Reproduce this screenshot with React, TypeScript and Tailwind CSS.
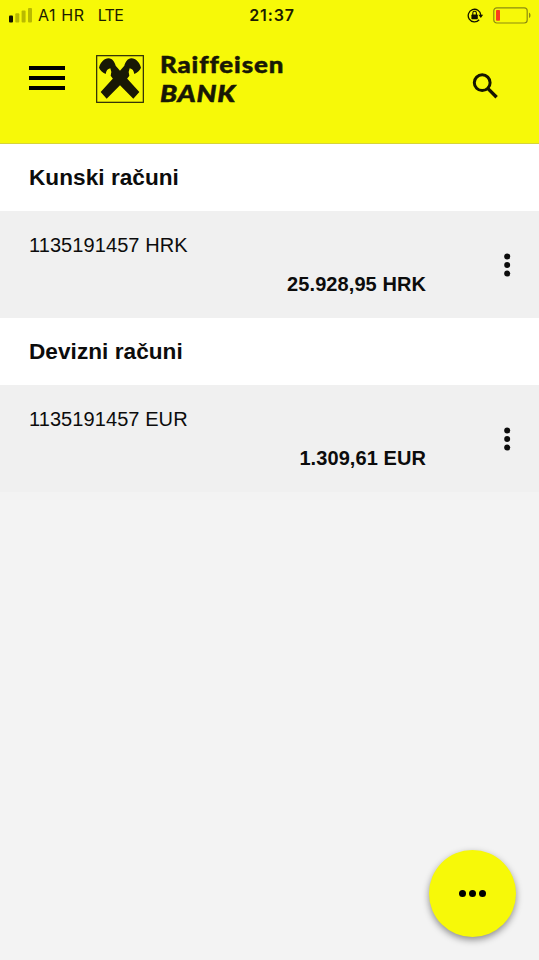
import React from 'react';

const accounts = [
    { title: 'Kunski računi', number: '1135191457 HRK', balance: '25.928,95 HRK' },
    { title: 'Devizni računi', number: '1135191457 EUR', balance: '1.309,61 EUR' },
];

const StatusBar = () => (
    <div className="grid grid-cols-[1fr_auto_1fr] items-center h-[30px] pl-[9px] pr-[8px] font-['Inter',sans-serif] text-[16px] leading-[30px] text-[#1c1c00]">
        <div className="flex items-center">
            <svg width="24" height="15" viewBox="0 0 24 15" className="mr-[5px]">
                <rect x="0" y="7.5" width="4" height="7" rx="1" fill="#111100" />
                <rect x="6.3" y="5.3" width="4" height="9.2" rx="1" fill="#b9b900" />
                <rect x="12.6" y="2.6" width="4" height="11.9" rx="1" fill="#b9b900" />
                <rect x="19" y="0" width="4" height="14.5" rx="1" fill="#b9b900" />
            </svg>
            <span className="tracking-[0.6px]">A1 HR</span>
            <span className="ml-[13px] tracking-[-0.6px]">LTE</span>
        </div>
        <span className="pl-[4px] font-semibold tracking-[0.9px]">21:37</span>
        <div className="flex items-center justify-end gap-[9px]">
            <svg width="17" height="15" viewBox="0 0 17 15" fill="none">
                <path d="M12.2 11.8A6.3 6.3 0 1 1 13.8 7" stroke="#111100" strokeWidth="1.3" />
                <path d="M11.4 6.8h4.8l-2.4 3.2z" fill="#111100" />
                <rect x="4.4" y="6.6" width="6.4" height="4.6" rx="0.6" fill="#111100" />
                <path d="M5.8 7V5.1a1.8 1.8 0 0 1 3.6 0V7" stroke="#111100" strokeWidth="1.1" />
            </svg>
            <svg width="38" height="17" viewBox="0 0 38 17" fill="none">
                <rect x="0.8" y="0.8" width="33.4" height="15.2" rx="3" stroke="#8c8c10" strokeWidth="1.2" />
                <rect x="3" y="3" width="4" height="10.8" rx="0.8" fill="#fb3d1c" />
                <path d="M36 5.8c2 .6 2 4.6 0 5.2z" fill="#8c8c10" />
            </svg>
        </div>
    </div>
);

const horseBeam = 'M9 38C14 21 24 11 38 10C49 11 55 19 59 32L72 47L130 111L112 131L72 91L52 73L44 62L46 51L43 40C34 42 31 47 29 57C19 51 12 46 9 38Z';

const Logo = () => (
    <div className="flex items-start">
        <svg width="48" height="48" viewBox="0 0 144 144" fill="#181805" className="mt-[0.7px]">
            <rect x="2" y="2" width="140" height="140" fill="none" stroke="#282808" strokeWidth="3.6" />
            <path d={horseBeam} />
            <path d={horseBeam} transform="matrix(-1 0 0 1 144 0)" />
        </svg>
        <div className="-mt-[4px] ml-[16px] flex flex-col items-start font-['Lato',sans-serif] font-black text-[23.5px] leading-[29px] text-[#181805]">
            <span className="origin-left scale-x-[1.1] tracking-[0.8px] [-webkit-text-stroke:0.5px_#181805]">Raiffeisen</span>
            <span className="origin-left scale-x-[1.18] italic tracking-[0.6px] [-webkit-text-stroke:0.5px_#181805]">BANK</span>
        </div>
    </div>
);

const Header = () => (
    <header className="h-[144px] bg-[#f7f908] border-b border-[#d6d43a]">
        <StatusBar />
        <div className="flex items-start pl-[29px] pr-[41px] pt-[24px]">
            <button className="mt-[12px] mr-[31px] flex flex-col gap-[6px]" aria-label="Menu">
                <span className="block h-[4px] w-[36px] bg-black" />
                <span className="block h-[4px] w-[36px] bg-black" />
                <span className="block h-[4px] w-[36px] bg-black" />
            </button>
            <Logo />
            <button className="ml-auto mt-[19px]" aria-label="Search">
                <svg width="26" height="26" viewBox="0 0 26 26" fill="none" stroke="#151500">
                    <circle cx="10.2" cy="9.7" r="7.9" strokeWidth="3" />
                    <path d="M16 15.6L24.6 24.2" strokeWidth="3.4" />
                </svg>
            </button>
        </div>
    </header>
);

const AccountSection = ({ title, number, balance }: (typeof accounts)[number]) => (
    <section className="text-[#0c0c0c]">
        <h2 className="h-[67px] bg-white pl-[29px] text-[22.6px] leading-[68px] font-bold tracking-[0.04px]">{title}</h2>
        <div className="flex h-[107px] bg-[#f0f0f0] pl-[29px] pr-[28px]">
            <div className="w-[397px] pt-[22px] text-[20px] leading-[24px]">
                <p className="tracking-[0.08px]">{number}</p>
                <p className="mt-[15px] text-right font-bold tracking-[0.08px]">{balance}</p>
            </div>
            <button className="ml-auto self-center" aria-label="More">
                <svg width="7" height="24" viewBox="0 0 7 24" fill="#0c0c0c">
                    <circle cx="3.2" cy="3.4" r="3" />
                    <circle cx="3.2" cy="12" r="3" />
                    <circle cx="3.2" cy="20.6" r="3" />
                </svg>
            </button>
        </div>
    </section>
);

export default function App() {
    return (
        <div className="relative h-[960px] w-[539px] overflow-hidden bg-[#f3f3f3] font-['Liberation_Sans',Arial,sans-serif]">
            <Header />
            {accounts.map((account) => (
                <AccountSection key={account.title} {...account} />
            ))}
            <button
                className="absolute right-[23px] bottom-[23px] flex h-[87px] w-[87px] items-center justify-center gap-[3.5px] rounded-full bg-[#f7f908] shadow-[0_3px_7px_rgba(0,0,0,0.42)]"
                aria-label="Actions"
            >
                <span className="h-[6.6px] w-[6.6px] rounded-full bg-black" />
                <span className="h-[6.6px] w-[6.6px] rounded-full bg-black" />
                <span className="h-[6.6px] w-[6.6px] rounded-full bg-black" />
            </button>
        </div>
    );
}
